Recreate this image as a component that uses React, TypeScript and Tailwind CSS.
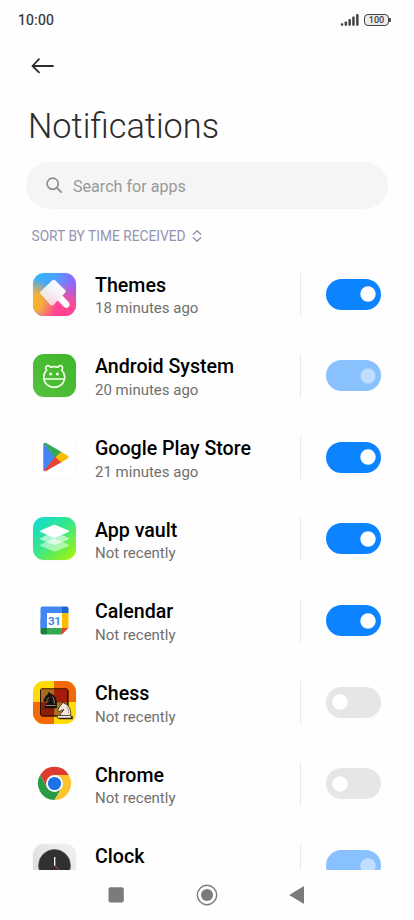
import React from 'react';
import clsx from 'clsx';

type ToggleState = 'on' | 'off' | 'locked';

interface AppEntry {
  name: string;
  received?: string;
  state: ToggleState;
  icon: React.ReactNode;
}

const ThemesIcon = () => (
  <svg viewBox="0 0 43 43" className="w-full h-full">
    <defs>
      <linearGradient id="th-base" x1="0" y1="0.15" x2="1" y2="0.3">
        <stop offset="0" stopColor="#35b5f5" />
        <stop offset="0.5" stopColor="#4aa2ff" />
        <stop offset="1" stopColor="#9a5cff" />
      </linearGradient>
      <radialGradient id="th-pink" cx="0.7" cy="1.05" r="0.85">
        <stop offset="0" stopColor="#ff3f8f" />
        <stop offset="0.45" stopColor="#ff4a95" />
        <stop offset="1" stopColor="#ff4a95" stopOpacity="0" />
      </radialGradient>
      <radialGradient id="th-gold" cx="0" cy="0.68" r="0.55">
        <stop offset="0" stopColor="#ffb61e" />
        <stop offset="0.4" stopColor="#ffb02a" stopOpacity="0.9" />
        <stop offset="1" stopColor="#ffa040" stopOpacity="0" />
      </radialGradient>
      <linearGradient id="th-brush" x1="1" y1="0" x2="0.2" y2="1">
        <stop offset="0" stopColor="#fff" />
        <stop offset="0.45" stopColor="#fff" stopOpacity="0.92" />
        <stop offset="1" stopColor="#fff" stopOpacity="0.65" />
      </linearGradient>
    </defs>
    <rect width="43" height="43" fill="url(#th-base)" />
    <rect width="43" height="43" fill="url(#th-pink)" />
    <rect width="43" height="43" fill="url(#th-gold)" />
    <path d="M7.600 18.500 19.300 7.300q1.400-1.200 2.800 0l10.200 9.900q1 1.200 0 2.400l-3 3.200-9 9.200q-1.400 1.200-2.800 0L7.600 21q-1.100-1.200 0-2.500Z" fill="url(#th-brush)" />
    <path d="m29.300 22.500 6.700 7q1.500 2.200-.5 4.400-2.200 1.900-4.400.2l-6.500-6.800Z" fill="#fff" />
  </svg>
);

const AndroidIcon = () => (
  <svg viewBox="0 0 43 43" className="w-full h-full">
    <defs>
      <linearGradient id="an-bg" x1="1" y1="0" x2="0" y2="1">
        <stop offset="0" stopColor="#3fb528" />
        <stop offset="1" stopColor="#55c241" />
      </linearGradient>
    </defs>
    <rect width="43" height="43" fill="url(#an-bg)" />
    <g fill="none" stroke="#f1ffe9" strokeWidth="1.600" strokeLinejoin="round">
      <path d="M13.800 16c-1.900-1.800-.9-4.200.9-4.400 1.500-.1 2.300.7 2.700 1.700 2.400-.8 5.200-.8 7.600 0 .4-1 1.200-1.800 2.700-1.700 1.800.2 2.800 2.600.9 4.400 2.200 2.100 3.100 4.200 3.100 7 0 6-4.400 10.200-10.500 10.200S10.700 29 10.700 23c0-2.800.9-4.900 3.100-7Z" />
      <path d="M10.900 25h20.600" />
    </g>
    <circle cx="17.700" cy="20" r="1.500" fill="#f1ffe9" />
    <circle cx="24.400" cy="20" r="1.500" fill="#f1ffe9" />
  </svg>
);

const PlayIcon = () => (
  <svg viewBox="0 0 43 43" className="w-full h-full">
    <path d="M10.300 8.500v25.200q0 .8.600 1.200L23.600 21.400 10.800 7.200q-.5.500-.5 1.300Z" fill="#4285f4" />
    <path d="M10.800 7.200q1-.8 2.300-.1l15.600 9-6 6.300Z" fill="#34a853" />
    <path d="M10.800 34.900q1.100.7 2.300 0l15.700-9-6-5.800Z" fill="#ea4335" />
    <path d="m28.300 15.800 6 3.600q2.600 1.700 0 3.400l-6 3.600-5.800-5.200Z" fill="#fbbc04" />
  </svg>
);

const VaultIcon = () => (
  <svg viewBox="0 0 43 43" className="w-full h-full">
    <defs>
      <linearGradient id="va-bg" x1="0.050" y1="0" x2="0.950" y2="1">
        <stop offset="0" stopColor="#0cdbd8" />
        <stop offset="0.5" stopColor="#3ce883" />
        <stop offset="1" stopColor="#a8f500" />
      </linearGradient>
    </defs>
    <rect width="43" height="43" fill="url(#va-bg)" />
    <path d="M7.600 27.500 21.500 21l14 6.500q1 .7 0 1.400L22.600 34.200q-1.100.4-2.200 0L7.600 28.900q-1-.7 0-1.400Z" fill="#fff" fillOpacity="0.500" />
    <path d="M7.600 21 21.500 14.500l14 6.500q1 .7 0 1.400L22.600 27.700q-1.100.4-2.200 0L7.600 22.400q-1-.7 0-1.400Z" fill="#fff" fillOpacity="0.600" />
    <path d="M7.600 13.500 20.400 8q1.100-.4 2.200 0l12.900 5.500q1 .7 0 1.400L22.600 20.500q-1.100.4-2.200 0L7.600 14.900q-1-.7 0-1.400Z" fill="#fff" />
  </svg>
);

const CalendarIcon = () => (
  <svg viewBox="0 0 43 43" className="w-full h-full">
    <path d="M7.500 28.500v-19q0-2 2-2h19.500v6.500H14v14.500Z" fill="#4285f4" />
    <path d="M7.500 20H14v9H7.500Z" fill="#4285f4" />
    <path d="M29 7.500h4.500q2 0 2 2V14H29Z" fill="#1967d2" />
    <path d="M29 14h6.500v15H29Z" fill="#fbbc04" />
    <path d="M14 29h15v6.500H14Z" fill="#34a853" />
    <path d="M7.500 29H14v6.500H9.500q-2 0-2-2Z" fill="#188038" />
    <path d="M29 29h6.500L29 35.500Z" fill="#ea4335" />
    <text x="21.200" y="25.600" textAnchor="middle" fill="#2f78dc" fontFamily="Roboto, sans-serif" fontSize="11.800" fontWeight="500" letterSpacing="-0.600">31</text>
  </svg>
);

const KNIGHT = 'M2.500 15h10.800c.3-3.500-.2-6.900-2-9.100C10.200 4.300 8.600 3.300 7 3L5.600 1.400 5 3.200C3.400 4.500 1.800 6.800.8 9c-.4 1.100.2 2 1.300 2l1.700-1.100c1 0 2-.4 2.700-1.200C6.300 10.900 3.400 12 2.500 15Z';

const ChessIcon = () => (
  <svg viewBox="0 0 43 43" className="w-full h-full">
    <rect width="43" height="43" fill="#ffdb08" />
    <path d="M21 0h22v21H21v22H0V21h21Z" fill="#f26a07" />
    <rect x="8.500" y="8.500" width="27.500" height="27.500" rx="1.500" fill="#3b1604" fillOpacity="0.650" />
    <rect x="7.500" y="7.800" width="27" height="27" rx="1.500" fill="#7e210a" stroke="#291004" strokeWidth="1" />
    <path d="M8 8.300h13.300v13.200H8Z" fill="#a86a20" />
    <path d="M21.300 8.300H34v13.200H21.300Z" fill="#a51d08" />
    <path d="M8 21.500h13.300v12.800H8Z" fill="#8a1e08" />
    <path d="M21.300 21.500H34v12.800H21.300Z" fill="#ad7624" />
    <g transform="translate(10.200 9.800)">
      <path d={KNIGHT} fill="#17120f" stroke="#0e0b09" strokeWidth="0.600" />
      <path d="M1.200 15.100h12.500v2.400H1.200Z" fill="#17120f" />
      <path d="M2.500 14.700h10M3 9.300l3-2.600M9.200 5.800c1.700 2.200 2 4.800 1.800 7" fill="none" stroke="#c9b9a5" strokeWidth="0.700" />
    </g>
    <g transform="translate(24.300 19.500)">
      <path d="M1.500 15.500h14v3.300h-14Z" fill="#3a2205" />
      <path d={KNIGHT} fill="#f4ecda" stroke="#2b1d10" strokeWidth="0.800" />
      <path d="M0 15h13.800v2.600H0Z" fill="#f4ecda" stroke="#2b1d10" strokeWidth="0.600" />
      <path d="M9.500 6c1.500 2.200 1.800 4.700 1.600 7.200M3.800 7.500l.8-.6" fill="none" stroke="#8a7b62" strokeWidth="0.700" />
    </g>
  </svg>
);

const ChromeIcon = () => (
  <svg viewBox="0 0 43 43" className="w-full h-full">
    <path d="M21.500 13.100h14.400A16.600 16.600 0 0 0 7.100 13.100l7.100 12.500Z" fill="#dd3b30" />
    <path d="M14.200 25.700 7.100 13.100a16.600 16.600 0 0 0 14.400 24.900l7.300-12.300Z" fill="#2a9a47" />
    <path d="M28.800 25.600 21.500 38a16.600 16.600 0 0 0 14.400-24.900H21.500Z" fill="#fcc42c" />
    <circle cx="21.500" cy="21.500" r="8.400" fill="#fff" />
    <circle cx="21.500" cy="21.500" r="6.600" fill="#1b72e5" />
  </svg>
);

const ClockIcon = () => (
  <svg viewBox="0 0 43 43" className="w-full h-full">
    <defs>
      <linearGradient id="ck-bg" x1="1" y1="0" x2="0" y2="1">
        <stop offset="0" stopColor="#f1f1f1" />
        <stop offset="1" stopColor="#d9d9d9" />
      </linearGradient>
    </defs>
    <rect width="43" height="43" fill="url(#ck-bg)" />
    <circle cx="21.500" cy="21.500" r="16" fill="#303030" stroke="#555" strokeWidth="0.600" />
    <path d="M21.700 13v8.800" stroke="#fff" strokeWidth="1.300" />
    <path d="m21.700 21.600 7 7" stroke="#d84848" strokeWidth="1" />
  </svg>
);

const apps: AppEntry[] = [
  { name: 'Themes', received: '18 minutes ago', state: 'on', icon: <ThemesIcon /> },
  { name: 'Android System', received: '20 minutes ago', state: 'locked', icon: <AndroidIcon /> },
  { name: 'Google Play Store', received: '21 minutes ago', state: 'on', icon: <PlayIcon /> },
  { name: 'App vault', received: 'Not recently', state: 'on', icon: <VaultIcon /> },
  { name: 'Calendar', received: 'Not recently', state: 'on', icon: <CalendarIcon /> },
  { name: 'Chess', received: 'Not recently', state: 'off', icon: <ChessIcon /> },
  { name: 'Chrome', received: 'Not recently', state: 'off', icon: <ChromeIcon /> },
  { name: 'Clock', state: 'locked', icon: <ClockIcon /> },
];

const Toggle: React.FC<{ state: ToggleState }> = ({ state }) => (
  <button
    role="switch"
    aria-checked={state !== 'off'}
    disabled={state === 'locked'}
    className={clsx(
      'w-[55px] h-[31px] rounded-full flex items-center shrink-0 px-[5.500px]',
      state === 'on' && 'bg-[#0d84ff] justify-end',
      state === 'locked' && 'bg-[#89c1ff] justify-end',
      state === 'off' && 'bg-[#e6e6e6] justify-start'
    )}
  >
    <svg width="16" height="16" viewBox="0 0 16 16" className={clsx('shrink-0', state === 'locked' ? 'fill-[#bfdeff]' : 'fill-white')}>
      <circle cx="8" cy="8" r="7.700" />
    </svg>
  </button>
);

const AppRow: React.FC<{ app: AppEntry }> = ({ app }) => (
  <li className="h-[81.670px] shrink-0 flex items-center pl-[33px] pr-[32.700px]">
    <div className="w-[43px] h-[43px] rounded-[11px] overflow-hidden shrink-0 ring-1 ring-[#f9f9f9]">{app.icon}</div>
    <div className="flex-1 ml-[19px] pt-[5px]">
      <div className="text-[19.600px] leading-[24px] font-medium text-black whitespace-nowrap">{app.name}</div>
      <div className="h-[22px] -mt-[0.500px] text-[15px] leading-[22px] text-[#707070] whitespace-nowrap">{app.received}</div>
    </div>
    <div className="w-px h-[43px] bg-[#e9e9e9] mr-[25.300px]" />
    <Toggle state={app.state} />
  </li>
);

const StatusBar = () => (
  <div className="h-10 shrink-0 flex items-center justify-between pl-[18px] pr-[23px]">
    <span className="text-[14px] leading-4 tracking-[0.250px] text-[#2e2e2e] [-webkit-text-stroke:0.200px_#2e2e2e]">10:00</span>
    <div className="flex items-center gap-[4px]">
      <svg width="20" height="14" viewBox="0 0 20 14" fill="#444">
        <rect x="0.800" y="10.300" width="2.500" height="2.500" rx="0.800" />
        <rect x="4.600" y="8.400" width="2.500" height="4.400" rx="0.800" />
        <rect x="8.400" y="6.100" width="2.500" height="6.700" rx="0.800" />
        <rect x="12.200" y="3.600" width="2.500" height="9.200" rx="0.800" />
        <rect x="16.100" y="1.100" width="2.500" height="11.700" rx="0.800" />
      </svg>
      <div className="flex items-center">
        <div className="w-[25px] h-[12px] rounded-[4px] border border-[#444] bg-[#ececec] flex items-center justify-center text-[9px] leading-none font-medium text-[#444]">100</div>
        <div className="w-[2px] h-[4px] bg-[#505050] rounded-r-[1px]" />
      </div>
    </div>
  </div>
);

const NavBar = () => (
  <nav className="h-[50px] shrink-0 flex items-center bg-[#fefefe] pl-[108px]">
    <svg width="16" height="16" viewBox="0 0 16 16"><rect x="0.500" y="0.200" width="15.300" height="15.300" rx="2" fill="#7b7b7b" /></svg>
    <svg width="22" height="22" viewBox="0 0 22 22" className="ml-[71.500px]">
      <circle cx="11" cy="11" r="9.700" fill="none" stroke="#7b7b7b" strokeWidth="1.400" />
      <circle cx="11" cy="11" r="6" fill="#7b7b7b" />
    </svg>
    <svg width="16" height="18" viewBox="0 0 16 18" className="ml-[71px]"><path d="M15 .8v16.400q0 .8-.8.4L1 9.600q-.8-.6 0-1.200L14.200.4q.8-.4.8.4Z" fill="#7b7b7b" /></svg>
  </nav>
);

const App: React.FC = () => {
  return (
    <div className="w-[414px] h-[920px] bg-[#fefefe] overflow-hidden flex flex-col font-['Roboto',sans-serif]">
      <StatusBar />
      <header className="shrink-0">
        <button className="block ml-[31px] mt-[17px]" aria-label="Back">
          <svg width="24" height="18" viewBox="0 0 24 18" fill="none" stroke="#2b2b2b" strokeWidth="1.800" strokeLinecap="round" strokeLinejoin="round">
            <path d="M22 9H1.500M8 2.200 1.500 9 8 15.400" />
          </svg>
        </button>
        <h1 className="ml-[28px] mt-[31px] text-[34.300px] leading-[40px] font-light text-[#2c2c2c]">Notifications</h1>
      </header>
      <div className="mt-[16px] mx-[26px] h-[47px] shrink-0 rounded-full bg-[#f5f5f5] flex items-center pl-[20px]">
        <svg width="17" height="17" viewBox="0 0 17 17" fill="none" stroke="#8c8c8c" strokeWidth="1.700" strokeLinecap="round">
          <circle cx="6.700" cy="6.700" r="5.600" />
          <path d="m10.900 10.900 4.300 4.300" />
        </svg>
        <span className="ml-[10px] mt-[3px] text-[16.100px] text-[#999]">Search for apps</span>
      </div>
      <button className="mt-[17px] ml-[31.500px] h-5 shrink-0 flex items-center text-[13.750px] text-[#9195b0]">
        <span className="mt-px">SORT BY TIME RECEIVED</span>
        <svg width="10" height="14" viewBox="0 0 10 14" className="ml-[6px]" fill="none" stroke="#9195b0" strokeWidth="1.400" strokeLinecap="round" strokeLinejoin="round">
          <path d="M1.300 5.200 5 1.800 8.700 5.200M1.300 8.800 5 12.200 8.700 8.800" />
        </svg>
      </button>
      <ul className="mt-[7.200px] flex-1 min-h-0 overflow-hidden flex flex-col">
        {apps.map((app) => (
          <AppRow key={app.name} app={app} />
        ))}
      </ul>
      <NavBar />
    </div>
  );
};

export default App;
